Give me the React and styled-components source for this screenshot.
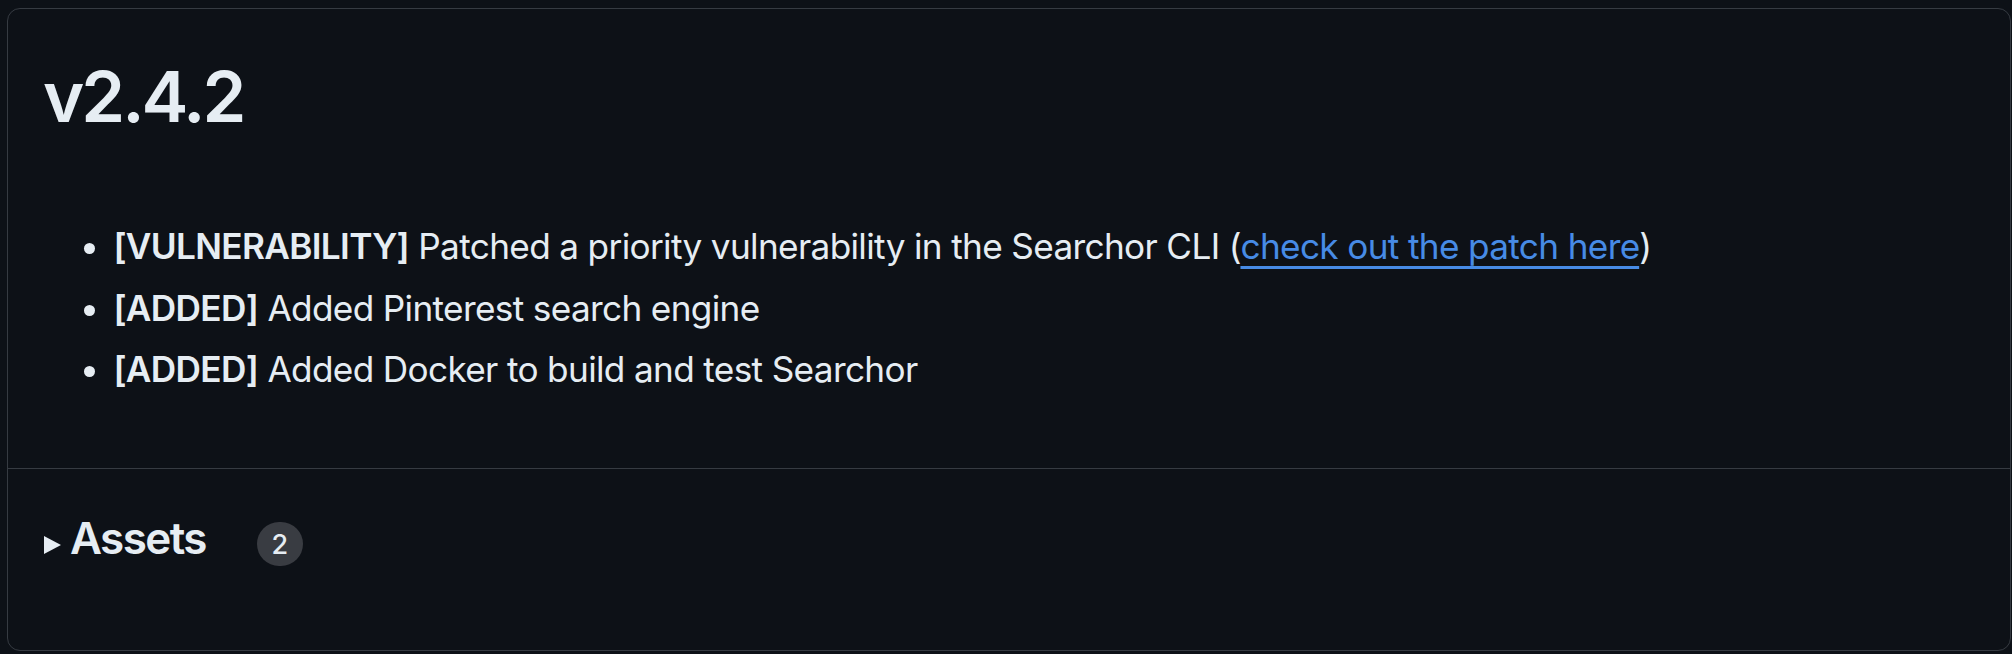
import React from "react";
import styled, { createGlobalStyle } from "styled-components";

const GlobalStyle = createGlobalStyle`
  html, body, #root { height: 100%; }
  body {
    margin: 0;
    background: #0d1117;
    color: #e6edf3;
    font-family: Inter, "Noto Sans", "Liberation Sans", sans-serif;
  }
  * { box-sizing: border-box; }
`;

const Page = styled.div`
  height: 100%;
  padding: 8px 1px 3px 7px;
  display: flex;
`;

const Card = styled.section`
  flex: 1;
  display: flex;
  flex-direction: column;
  border: 1px solid #363b42;
  border-radius: 13px;
  background: #0d1117;
  overflow: hidden;
`;

const Body = styled.div`
  padding: 44px 35px 35px 35px;
  border-bottom: 1px solid #363b42;
`;

const Title = styled.h1`
  margin: 0;
  font-size: 70.4px;
  line-height: 88px;
  font-weight: 600;
  letter-spacing: -3px;
  color: #e6edf3;
`;

const Notes = styled.ul`
  margin: 79px 0 37px 0;
  padding-left: 70.4px;
  font-size: 35.2px;
  line-height: 52.8px;
  letter-spacing: -0.66px;
  list-style: disc;
`;

const Note = styled.li`
  & + & { margin-top: 8.8px; }
`;

const Tag = styled.strong`
  font-weight: 600;
`;

const Link = styled.a`
  color: #478be6;
  text-decoration: underline;
  text-decoration-thickness: 2.5px;
  text-underline-offset: 7px;
`;

const Assets = styled.div`
  flex: 1;
  padding: 42px 35px 0 36px;
  display: flex;
  align-items: baseline;
`;

const Caret = styled.span`
  display: inline-block;
  width: 0;
  height: 0;
  border-top: 9.5px solid transparent;
  border-bottom: 9.5px solid transparent;
  border-left: 17px solid #e6edf3;
  margin-right: 9px;
`;

const AssetsTitle = styled.h3`
  margin: 0;
  font-size: 44px;
  line-height: 55px;
  font-weight: 600;
  letter-spacing: -1.6px;
  color: #e6edf3;
`;

const Counter = styled.span`
  display: inline-flex;
  align-items: center;
  justify-content: center;
  margin-left: 51px;
  min-width: 46px;
  height: 44px;
  padding: 0 13px;
  border-radius: 22px;
  background: #393c42;
  color: #e6edf3;
  font-size: 27px;
  font-weight: 500;
`;

export default function App() {
  return (
    <>
      <GlobalStyle />
      <Page>
        <Card>
          <Body>
            <Title>v2.4.2</Title>
            <Notes>
              <Note>
                <Tag>[VULNERABILITY]</Tag> Patched a priority vulnerability in the Searchor CLI (
                <Link href="#">check out the patch here</Link>)
              </Note>
              <Note>
                <Tag>[ADDED]</Tag> Added Pinterest search engine
              </Note>
              <Note>
                <Tag>[ADDED]</Tag> Added Docker to build and test Searchor
              </Note>
            </Notes>
          </Body>
          <Assets>
            <Caret />
            <AssetsTitle>Assets</AssetsTitle>
            <Counter>2</Counter>
          </Assets>
        </Card>
      </Page>
    </>
  );
}
